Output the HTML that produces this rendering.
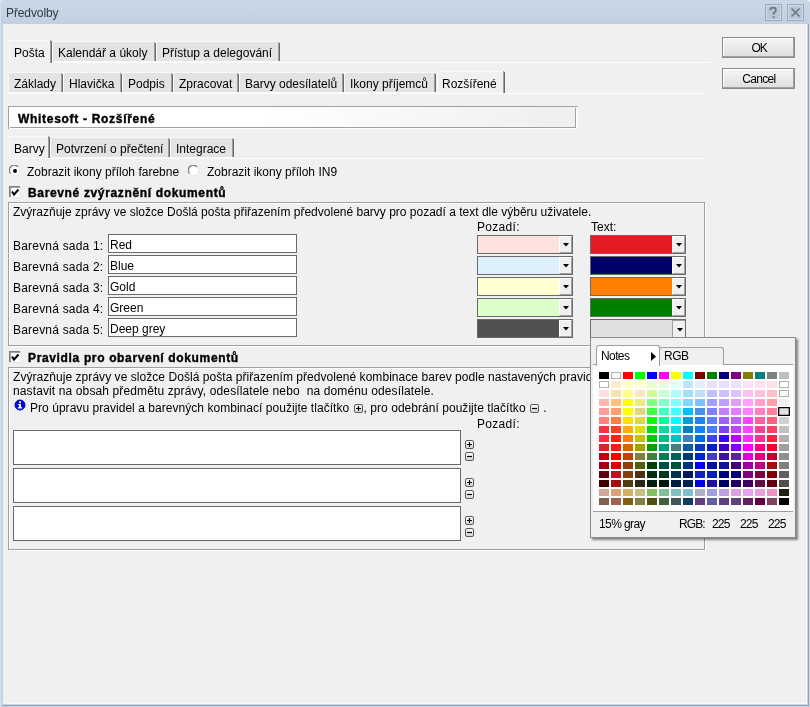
<!DOCTYPE html>
<html><head><meta charset="utf-8"><style>
html,body{margin:0;padding:0;width:810px;height:707px;overflow:hidden;position:relative;font-family:'Liberation Sans',sans-serif;}
.t{position:absolute;white-space:nowrap;line-height:1;will-change:transform;font-family:'Liberation Sans',sans-serif;}
.pal div{position:absolute;width:10px;height:7px}
.pm{display:inline-block;width:8px;height:8px;border:1px solid #555;border-radius:2px;font-size:9px;line-height:8px;text-align:center;vertical-align:0px;font-weight:700}
</style></head><body>
<div style="position:absolute;left:0px;top:0px;width:810px;height:707px;background:#fff;"></div><div style="position:absolute;left:0px;top:0px;width:810px;height:707px;background:#c6d5e5;border-radius:4px 4px 0 0;"></div><div style="position:absolute;left:1px;top:1px;width:808px;height:23px;background:linear-gradient(#c9d7e6,#c1d0e0);border-radius:3px 3px 0 0;"></div><div style="position:absolute;left:3px;top:24px;width:804px;height:680px;background:#f0f0f0;"></div><div style="position:absolute;left:806px;top:24px;width:1px;height:680px;background:#f8f8f8;"></div><div style="position:absolute;left:3px;top:703px;width:804px;height:1px;background:#f8f8f8;"></div><div style="position:absolute;left:808px;top:24px;width:1px;height:682px;background:#94a4b4;"></div><div style="position:absolute;left:2px;top:705px;width:807px;height:1px;background:#94a4b4;"></div><div style="position:absolute;left:0px;top:0px;width:1px;height:707px;background:#d3e0ee;"></div><div class="t" style="left:6px;top:7px;font-size:12px;font-weight:400;color:#2c4044;letter-spacing:-0.1px;">Předvolby</div><div style="position:absolute;left:765px;top:4px;width:17px;height:17px;background:#b8c7d6;border:1px solid #9aaaba;box-sizing:border-box;box-shadow:inset 0 0 0 1px #d0dce8;"></div><div style="position:absolute;left:787px;top:4px;width:17px;height:17px;background:#b8c7d6;border:1px solid #9aaaba;box-sizing:border-box;box-shadow:inset 0 0 0 1px #d0dce8;"></div><svg style="position:absolute;left:765px;top:4px" width="17" height="17"><path d="M5.3 6.2 Q5.3 3.6 8.1 3.6 Q10.9 3.6 10.9 6.1 Q10.9 7.6 8.6 8.9 V10.8" fill="none" stroke="#6b7780" stroke-width="1.7"/><rect x="7.7" y="12.2" width="1.8" height="1.9" fill="#6b7780"/></svg><svg style="position:absolute;left:787px;top:4px" width="17" height="17"><path d="M4.5 4.5 L12.5 12.5 M12.5 4.5 L4.5 12.5" stroke="#6b7780" stroke-width="1.6"/></svg><div style="position:absolute;left:722px;top:37px;width:73px;height:21px;background:linear-gradient(#f6f6f6,#dedede);border:1px solid #8a8a8a;box-sizing:border-box;box-shadow:inset -1px -1px 0 #a0a0a0, inset 1px 1px 0 #fff;"></div><div class="t" style="left:722px;top:42px;width:73px;text-align:center;font-size:12px;letter-spacing:-1.2px;text-indent:1.2px;">OK</div><div style="position:absolute;left:722px;top:68px;width:73px;height:21px;background:linear-gradient(#f6f6f6,#dedede);border:1px solid #8a8a8a;box-sizing:border-box;box-shadow:inset -1px -1px 0 #a0a0a0, inset 1px 1px 0 #fff;"></div><div class="t" style="left:722px;top:73px;width:73px;text-align:center;font-size:12px;letter-spacing:-0.7px;text-indent:0.7px;">Cancel</div><div style="position:absolute;left:9px;top:62px;width:702px;height:1px;background:#fdfdfd;"></div><div style="position:absolute;left:9px;top:93px;width:695px;height:1px;background:#fdfdfd;"></div><div style="position:absolute;left:9px;top:40px;width:42px;height:23px;background:#f0f0f0;"></div><div style="position:absolute;left:9px;top:40px;width:41px;height:1px;background:#f8f8f8;"></div><div style="position:absolute;left:9px;top:40px;width:1px;height:23px;background:#f8f8f8;"></div><div style="position:absolute;left:50px;top:40px;width:1px;height:23px;background:#a0a0a0;"></div><div style="position:absolute;left:51px;top:41px;width:1px;height:22px;background:#696969;"></div><div class="t" style="left:14px;top:47px;font-size:12px;font-weight:400;color:#000;letter-spacing:0px;">Pošta</div><div style="position:absolute;left:52px;top:41px;width:103px;height:21px;background:#f9f9f9;"></div><div style="position:absolute;left:53px;top:42px;width:102px;height:19px;background:#e3e3e3;"></div><div style="position:absolute;left:154px;top:42px;width:1px;height:19px;background:#a0a0a0;"></div><div style="position:absolute;left:155px;top:43px;width:1px;height:18px;background:#696969;"></div><div class="t" style="left:58px;top:47px;font-size:12px;font-weight:400;color:#000;letter-spacing:0px;">Kalendář a úkoly</div><div style="position:absolute;left:156px;top:41px;width:123px;height:21px;background:#f9f9f9;"></div><div style="position:absolute;left:157px;top:42px;width:122px;height:19px;background:#e3e3e3;"></div><div style="position:absolute;left:278px;top:42px;width:1px;height:19px;background:#a0a0a0;"></div><div style="position:absolute;left:279px;top:43px;width:1px;height:18px;background:#696969;"></div><div class="t" style="left:162px;top:47px;font-size:12px;font-weight:400;color:#000;letter-spacing:0px;">Přístup a delegování</div><div style="position:absolute;left:8px;top:72px;width:54px;height:21px;background:#f9f9f9;"></div><div style="position:absolute;left:9px;top:73px;width:53px;height:19px;background:#e3e3e3;"></div><div style="position:absolute;left:61px;top:73px;width:1px;height:19px;background:#a0a0a0;"></div><div style="position:absolute;left:62px;top:74px;width:1px;height:18px;background:#696969;"></div><div class="t" style="left:14px;top:78px;font-size:12px;font-weight:400;color:#000;letter-spacing:0px;">Základy</div><div style="position:absolute;left:63px;top:72px;width:58px;height:21px;background:#f9f9f9;"></div><div style="position:absolute;left:64px;top:73px;width:57px;height:19px;background:#e3e3e3;"></div><div style="position:absolute;left:120px;top:73px;width:1px;height:19px;background:#a0a0a0;"></div><div style="position:absolute;left:121px;top:74px;width:1px;height:18px;background:#696969;"></div><div class="t" style="left:69px;top:78px;font-size:12px;font-weight:400;color:#000;letter-spacing:0px;">Hlavička</div><div style="position:absolute;left:122px;top:72px;width:50px;height:21px;background:#f9f9f9;"></div><div style="position:absolute;left:123px;top:73px;width:49px;height:19px;background:#e3e3e3;"></div><div style="position:absolute;left:171px;top:73px;width:1px;height:19px;background:#a0a0a0;"></div><div style="position:absolute;left:172px;top:74px;width:1px;height:18px;background:#696969;"></div><div class="t" style="left:128px;top:78px;font-size:12px;font-weight:400;color:#000;letter-spacing:0px;">Podpis</div><div style="position:absolute;left:173px;top:72px;width:65px;height:21px;background:#f9f9f9;"></div><div style="position:absolute;left:174px;top:73px;width:64px;height:19px;background:#e3e3e3;"></div><div style="position:absolute;left:237px;top:73px;width:1px;height:19px;background:#a0a0a0;"></div><div style="position:absolute;left:238px;top:74px;width:1px;height:18px;background:#696969;"></div><div class="t" style="left:179px;top:78px;font-size:12px;font-weight:400;color:#000;letter-spacing:0px;">Zpracovat</div><div style="position:absolute;left:239px;top:72px;width:104px;height:21px;background:#f9f9f9;"></div><div style="position:absolute;left:240px;top:73px;width:103px;height:19px;background:#e3e3e3;"></div><div style="position:absolute;left:342px;top:73px;width:1px;height:19px;background:#a0a0a0;"></div><div style="position:absolute;left:343px;top:74px;width:1px;height:18px;background:#696969;"></div><div class="t" style="left:245px;top:78px;font-size:12px;font-weight:400;color:#000;letter-spacing:0px;">Barvy odesílatelů</div><div style="position:absolute;left:344px;top:72px;width:91px;height:21px;background:#f9f9f9;"></div><div style="position:absolute;left:345px;top:73px;width:90px;height:19px;background:#e3e3e3;"></div><div style="position:absolute;left:434px;top:73px;width:1px;height:19px;background:#a0a0a0;"></div><div style="position:absolute;left:435px;top:74px;width:1px;height:18px;background:#696969;"></div><div class="t" style="left:350px;top:78px;font-size:12px;font-weight:400;color:#000;letter-spacing:0px;">Ikony příjemců</div><div style="position:absolute;left:437px;top:71px;width:67px;height:22px;background:#f0f0f0;"></div><div style="position:absolute;left:437px;top:71px;width:66px;height:1px;background:#f8f8f8;"></div><div style="position:absolute;left:437px;top:71px;width:1px;height:22px;background:#f8f8f8;"></div><div style="position:absolute;left:503px;top:71px;width:1px;height:22px;background:#a0a0a0;"></div><div style="position:absolute;left:504px;top:72px;width:1px;height:21px;background:#696969;"></div><div class="t" style="left:442px;top:78px;font-size:12px;font-weight:400;color:#000;letter-spacing:0px;">Rozšířené</div><div style="position:absolute;left:8px;top:106px;width:570px;height:23px;background:linear-gradient(90deg,#ffffff 0%,#ffffff 45%,#f0f0f0 95%);"></div><div style="position:absolute;left:8px;top:106px;width:570px;height:1px;background:#a0a0a0;"></div><div style="position:absolute;left:8px;top:106px;width:1px;height:23px;background:#a0a0a0;"></div><div style="position:absolute;left:10px;top:127px;width:566px;height:1px;background:#a0a0a0;"></div><div style="position:absolute;left:575px;top:108px;width:1px;height:20px;background:#a0a0a0;"></div><div style="position:absolute;left:9px;top:128px;width:569px;height:1px;background:#fdfdfd;"></div><div style="position:absolute;left:576px;top:107px;width:2px;height:22px;background:#fdfdfd;"></div><div class="t" style="left:18px;top:113px;font-size:12px;font-weight:700;color:#000;letter-spacing:0.7px;-webkit-text-stroke:0.4px #000;">Whitesoft - Rozšířené</div><div style="position:absolute;left:9px;top:136px;width:40px;height:22px;background:#f0f0f0;"></div><div style="position:absolute;left:9px;top:136px;width:39px;height:1px;background:#f8f8f8;"></div><div style="position:absolute;left:9px;top:136px;width:1px;height:22px;background:#f8f8f8;"></div><div style="position:absolute;left:48px;top:136px;width:1px;height:22px;background:#a0a0a0;"></div><div style="position:absolute;left:49px;top:137px;width:1px;height:21px;background:#696969;"></div><div class="t" style="left:14px;top:143px;font-size:12px;font-weight:400;color:#000;letter-spacing:0px;">Barvy</div><div style="position:absolute;left:50px;top:137px;width:119px;height:21px;background:#f9f9f9;"></div><div style="position:absolute;left:51px;top:138px;width:118px;height:19px;background:#e3e3e3;"></div><div style="position:absolute;left:168px;top:138px;width:1px;height:19px;background:#a0a0a0;"></div><div style="position:absolute;left:169px;top:139px;width:1px;height:18px;background:#696969;"></div><div class="t" style="left:56px;top:143px;font-size:12px;font-weight:400;color:#000;letter-spacing:0px;">Potvrzení o přečtení</div><div style="position:absolute;left:170px;top:137px;width:63px;height:21px;background:#f9f9f9;"></div><div style="position:absolute;left:171px;top:138px;width:62px;height:19px;background:#e3e3e3;"></div><div style="position:absolute;left:232px;top:138px;width:1px;height:19px;background:#a0a0a0;"></div><div style="position:absolute;left:233px;top:139px;width:1px;height:18px;background:#696969;"></div><div class="t" style="left:176px;top:143px;font-size:12px;font-weight:400;color:#000;letter-spacing:0px;">Integrace</div><div style="position:absolute;left:9px;top:158px;width:695px;height:1px;background:#fdfdfd;"></div><svg style="position:absolute;left:9px;top:165px" width="12" height="12"><circle cx="6" cy="6" r="5" fill="#fff" stroke="#e8e8e8" stroke-width="1"/><path d="M1.5 8.5 A5 5 0 0 1 9 1.8" fill="none" stroke="#808080" stroke-width="1.3"/><circle cx="6" cy="6" r="2" fill="#000"/></svg><div class="t" style="left:27px;top:166px;font-size:12px;font-weight:400;color:#000;letter-spacing:0px;">Zobrazit ikony příloh farebne</div><svg style="position:absolute;left:188px;top:165px" width="12" height="12"><circle cx="6" cy="6" r="5" fill="#fff" stroke="#e8e8e8" stroke-width="1"/><path d="M1.5 8.5 A5 5 0 0 1 9 1.8" fill="none" stroke="#808080" stroke-width="1.3"/></svg><div class="t" style="left:207px;top:166px;font-size:12px;font-weight:400;color:#000;letter-spacing:0px;">Zobrazit ikony příloh IN9</div><svg style="position:absolute;left:9px;top:186px" width="12" height="12"><rect x="0" y="0" width="12" height="12" fill="#e6e6e6"/><rect x="0" y="0" width="11" height="11" fill="#808080"/><rect x="1" y="1" width="10" height="10" fill="#a0a0a0"/><rect x="2" y="2" width="9" height="9" fill="#fff"/><path d="M3 5.5 L5 8.5 L9.5 3.5" fill="none" stroke="#000" stroke-width="2"/></svg><div class="t" style="left:28px;top:187px;font-size:12px;font-weight:700;color:#000;letter-spacing:0.65px;-webkit-text-stroke:0.4px #000;">Barevné zvýraznění dokumentů</div><div style="position:absolute;left:8px;top:202px;width:697px;height:144px;border:1px solid #a0a0a0;box-sizing:border-box;box-shadow:1px 1px 0 #fff, inset 1px 1px 0 #fff;"></div><div class="t" style="left:13px;top:206px;font-size:12px;font-weight:400;color:#000;letter-spacing:0px;">Zvýrazňuje zprávy ve složce Došlá pošta přiřazením předvolené barvy pro pozadí a text dle výběru uživatele.</div><div class="t" style="left:477px;top:221px;font-size:12px;font-weight:400;color:#000;letter-spacing:0.3px;">Pozadí:</div><div class="t" style="left:590.5px;top:221px;font-size:12px;font-weight:400;color:#000;letter-spacing:0px;">Text:</div><div class="t" style="left:13px;top:240px;font-size:12px;font-weight:400;color:#000;letter-spacing:0.2px;">Barevná sada 1:</div><div style="position:absolute;left:108px;top:234px;width:189px;height:19px;background:#fff;border:1px solid #6a6a6a;box-sizing:border-box;"></div><div class="t" style="left:110px;top:239px;font-size:12px;font-weight:400;color:#000;letter-spacing:0px;">Red</div><div style="position:absolute;left:477px;top:235px;width:96px;height:19px;background:#fde2de;border:1px solid #6a6a6a;box-sizing:border-box;"></div><div style="position:absolute;left:559px;top:236px;width:13px;height:17px;background:#f0f0f0;border-left:1px solid #fff;border-top:1px solid #fff;border-right:1px solid #a0a0a0;border-bottom:1px solid #a0a0a0;box-sizing:border-box;"></div><svg style="position:absolute;left:563px;top:243px" width="6" height="4"><path d="M0 0 H6 L3 3.5 Z" fill="#000"/></svg><div style="position:absolute;left:590px;top:235px;width:96px;height:19px;background:#e31b23;border:1px solid #6a6a6a;box-sizing:border-box;"></div><div style="position:absolute;left:672px;top:236px;width:13px;height:17px;background:#f0f0f0;border-left:1px solid #fff;border-top:1px solid #fff;border-right:1px solid #a0a0a0;border-bottom:1px solid #a0a0a0;box-sizing:border-box;"></div><svg style="position:absolute;left:676px;top:243px" width="6" height="4"><path d="M0 0 H6 L3 3.5 Z" fill="#000"/></svg><div class="t" style="left:13px;top:261px;font-size:12px;font-weight:400;color:#000;letter-spacing:0.2px;">Barevná sada 2:</div><div style="position:absolute;left:108px;top:255px;width:189px;height:19px;background:#fff;border:1px solid #6a6a6a;box-sizing:border-box;"></div><div class="t" style="left:110px;top:260px;font-size:12px;font-weight:400;color:#000;letter-spacing:0px;">Blue</div><div style="position:absolute;left:477px;top:256px;width:96px;height:19px;background:#dff0fd;border:1px solid #6a6a6a;box-sizing:border-box;"></div><div style="position:absolute;left:559px;top:257px;width:13px;height:17px;background:#f0f0f0;border-left:1px solid #fff;border-top:1px solid #fff;border-right:1px solid #a0a0a0;border-bottom:1px solid #a0a0a0;box-sizing:border-box;"></div><svg style="position:absolute;left:563px;top:264px" width="6" height="4"><path d="M0 0 H6 L3 3.5 Z" fill="#000"/></svg><div style="position:absolute;left:590px;top:256px;width:96px;height:19px;background:#000066;border:1px solid #6a6a6a;box-sizing:border-box;"></div><div style="position:absolute;left:672px;top:257px;width:13px;height:17px;background:#f0f0f0;border-left:1px solid #fff;border-top:1px solid #fff;border-right:1px solid #a0a0a0;border-bottom:1px solid #a0a0a0;box-sizing:border-box;"></div><svg style="position:absolute;left:676px;top:264px" width="6" height="4"><path d="M0 0 H6 L3 3.5 Z" fill="#000"/></svg><div class="t" style="left:13px;top:282px;font-size:12px;font-weight:400;color:#000;letter-spacing:0.2px;">Barevná sada 3:</div><div style="position:absolute;left:108px;top:276px;width:189px;height:19px;background:#fff;border:1px solid #6a6a6a;box-sizing:border-box;"></div><div class="t" style="left:110px;top:281px;font-size:12px;font-weight:400;color:#000;letter-spacing:0px;">Gold</div><div style="position:absolute;left:477px;top:277px;width:96px;height:19px;background:#ffffd2;border:1px solid #6a6a6a;box-sizing:border-box;"></div><div style="position:absolute;left:559px;top:278px;width:13px;height:17px;background:#f0f0f0;border-left:1px solid #fff;border-top:1px solid #fff;border-right:1px solid #a0a0a0;border-bottom:1px solid #a0a0a0;box-sizing:border-box;"></div><svg style="position:absolute;left:563px;top:285px" width="6" height="4"><path d="M0 0 H6 L3 3.5 Z" fill="#000"/></svg><div style="position:absolute;left:590px;top:277px;width:96px;height:19px;background:#ff8000;border:1px solid #6a6a6a;box-sizing:border-box;"></div><div style="position:absolute;left:672px;top:278px;width:13px;height:17px;background:#f0f0f0;border-left:1px solid #fff;border-top:1px solid #fff;border-right:1px solid #a0a0a0;border-bottom:1px solid #a0a0a0;box-sizing:border-box;"></div><svg style="position:absolute;left:676px;top:285px" width="6" height="4"><path d="M0 0 H6 L3 3.5 Z" fill="#000"/></svg><div class="t" style="left:13px;top:303px;font-size:12px;font-weight:400;color:#000;letter-spacing:0.2px;">Barevná sada 4:</div><div style="position:absolute;left:108px;top:297px;width:189px;height:19px;background:#fff;border:1px solid #6a6a6a;box-sizing:border-box;"></div><div class="t" style="left:110px;top:302px;font-size:12px;font-weight:400;color:#000;letter-spacing:0px;">Green</div><div style="position:absolute;left:477px;top:298px;width:96px;height:19px;background:#dcfec8;border:1px solid #6a6a6a;box-sizing:border-box;"></div><div style="position:absolute;left:559px;top:299px;width:13px;height:17px;background:#f0f0f0;border-left:1px solid #fff;border-top:1px solid #fff;border-right:1px solid #a0a0a0;border-bottom:1px solid #a0a0a0;box-sizing:border-box;"></div><svg style="position:absolute;left:563px;top:306px" width="6" height="4"><path d="M0 0 H6 L3 3.5 Z" fill="#000"/></svg><div style="position:absolute;left:590px;top:298px;width:96px;height:19px;background:#007f00;border:1px solid #6a6a6a;box-sizing:border-box;"></div><div style="position:absolute;left:672px;top:299px;width:13px;height:17px;background:#f0f0f0;border-left:1px solid #fff;border-top:1px solid #fff;border-right:1px solid #a0a0a0;border-bottom:1px solid #a0a0a0;box-sizing:border-box;"></div><svg style="position:absolute;left:676px;top:306px" width="6" height="4"><path d="M0 0 H6 L3 3.5 Z" fill="#000"/></svg><div class="t" style="left:13px;top:324px;font-size:12px;font-weight:400;color:#000;letter-spacing:0.2px;">Barevná sada 5:</div><div style="position:absolute;left:108px;top:318px;width:189px;height:19px;background:#fff;border:1px solid #6a6a6a;box-sizing:border-box;"></div><div class="t" style="left:110px;top:323px;font-size:12px;font-weight:400;color:#000;letter-spacing:0px;">Deep grey</div><div style="position:absolute;left:477px;top:319px;width:96px;height:19px;background:#505050;border:1px solid #6a6a6a;box-sizing:border-box;"></div><div style="position:absolute;left:559px;top:320px;width:13px;height:17px;background:#f0f0f0;border-left:1px solid #fff;border-top:1px solid #fff;border-right:1px solid #a0a0a0;border-bottom:1px solid #a0a0a0;box-sizing:border-box;"></div><svg style="position:absolute;left:563px;top:327px" width="6" height="4"><path d="M0 0 H6 L3 3.5 Z" fill="#000"/></svg><div style="position:absolute;left:590px;top:319px;width:96px;height:19px;background:#e0e0e0;border:1px solid #6a6a6a;box-sizing:border-box;"></div><div style="position:absolute;left:672px;top:320px;width:13px;height:17px;background:#f0f0f0;border-left:1px solid #a0a0a0;border-top:1px solid #a0a0a0;box-sizing:border-box;"></div><svg style="position:absolute;left:677px;top:328px" width="6" height="4"><path d="M0 0 H6 L3 3.5 Z" fill="#000"/></svg><svg style="position:absolute;left:9px;top:351px" width="12" height="12"><rect x="0" y="0" width="12" height="12" fill="#e6e6e6"/><rect x="0" y="0" width="11" height="11" fill="#808080"/><rect x="1" y="1" width="10" height="10" fill="#a0a0a0"/><rect x="2" y="2" width="9" height="9" fill="#fff"/><path d="M3 5.5 L5 8.5 L9.5 3.5" fill="none" stroke="#000" stroke-width="2"/></svg><div class="t" style="left:28px;top:352px;font-size:12px;font-weight:700;color:#000;letter-spacing:0.65px;-webkit-text-stroke:0.4px #000;">Pravidla pro obarvení dokumentů</div><div style="position:absolute;left:8px;top:367px;width:697px;height:183px;border:1px solid #a0a0a0;box-sizing:border-box;box-shadow:1px 1px 0 #fff, inset 1px 1px 0 #fff;"></div><div class="t" style="left:13px;top:371px;font-size:12px;font-weight:400;color:#000;letter-spacing:0.05px;">Zvýrazňuje zprávy ve složce Došlá pošta přiřazením předvolené kombinace barev podle nastavených pravidel. Pravidla lze</div><div class="t" style="left:13px;top:385px;font-size:12px;font-weight:400;color:#000;letter-spacing:0.12px;">nastavit na obsah předmětu zprávy, odesílatele nebo&nbsp; na doménu odesílatele.</div><svg style="position:absolute;left:14px;top:399px" width="12" height="12"><circle cx="6" cy="6" r="5" fill="#0000ff" stroke="#000070" stroke-width="0.9"/><rect x="5.1" y="2.3" width="1.9" height="1.8" fill="#fff"/><path d="M4 5 H7 V8.3 H8.2 V9.5 H3.8 V8.3 H5 V6.1 H4 Z" fill="#fff"/></svg><div class="t" style="left:30px;top:402px;font-size:12px;font-weight:400;color:#000;letter-spacing:0.04px;">Pro úpravu pravidel a barevných kombinací použijte tlačítko <svg style="vertical-align:-1px;margin:0 1px 0 1px" width="9" height="9"><defs><linearGradient id="gi1" x1="0" y1="0" x2="0" y2="1"><stop offset="0" stop-color="#ffffff"/><stop offset="1" stop-color="#d4d4d4"/></linearGradient></defs><rect x="0.5" y="0.5" width="8" height="8" rx="1.5" fill="url(#gi1)" stroke="#5a5a5a"/><path d="M2 4.5 H7 M4.5 2 V7" stroke="#000" stroke-width="1.2"/></svg>, pro odebrání použijte tlačítko <svg style="vertical-align:-1px;margin:0 1px 0 1px" width="9" height="9"><defs><linearGradient id="gi2" x1="0" y1="0" x2="0" y2="1"><stop offset="0" stop-color="#ffffff"/><stop offset="1" stop-color="#d4d4d4"/></linearGradient></defs><rect x="0.5" y="0.5" width="8" height="8" rx="1.5" fill="url(#gi2)" stroke="#5a5a5a"/><path d="M2 4.5 H7" stroke="#000" stroke-width="1.2"/></svg> .</div><div class="t" style="left:477px;top:418px;font-size:12px;font-weight:400;color:#000;letter-spacing:0.3px;">Pozadí:</div><div style="position:absolute;left:13px;top:430px;width:448px;height:35px;background:#fff;border:1px solid #6a6a6a;box-sizing:border-box;"></div><svg style="position:absolute;left:465px;top:440px" width="9" height="9"><defs><linearGradient id="g465440" x1="0" y1="0" x2="0" y2="1"><stop offset="0" stop-color="#ffffff"/><stop offset="1" stop-color="#d4d4d4"/></linearGradient></defs><rect x="0.5" y="0.5" width="8" height="8" rx="1.5" fill="url(#g465440)" stroke="#5a5a5a"/><path d="M2 4.5 H7 M4.5 2 V7" stroke="#000" stroke-width="1.2"/></svg><svg style="position:absolute;left:465px;top:452px" width="9" height="9"><defs><linearGradient id="g465452" x1="0" y1="0" x2="0" y2="1"><stop offset="0" stop-color="#ffffff"/><stop offset="1" stop-color="#d4d4d4"/></linearGradient></defs><rect x="0.5" y="0.5" width="8" height="8" rx="1.5" fill="url(#g465452)" stroke="#5a5a5a"/><path d="M2 4.5 H7" stroke="#000" stroke-width="1.2"/></svg><div style="position:absolute;left:13px;top:468px;width:448px;height:35px;background:#fff;border:1px solid #6a6a6a;box-sizing:border-box;"></div><svg style="position:absolute;left:465px;top:478px" width="9" height="9"><defs><linearGradient id="g465478" x1="0" y1="0" x2="0" y2="1"><stop offset="0" stop-color="#ffffff"/><stop offset="1" stop-color="#d4d4d4"/></linearGradient></defs><rect x="0.5" y="0.5" width="8" height="8" rx="1.5" fill="url(#g465478)" stroke="#5a5a5a"/><path d="M2 4.5 H7 M4.5 2 V7" stroke="#000" stroke-width="1.2"/></svg><svg style="position:absolute;left:465px;top:490px" width="9" height="9"><defs><linearGradient id="g465490" x1="0" y1="0" x2="0" y2="1"><stop offset="0" stop-color="#ffffff"/><stop offset="1" stop-color="#d4d4d4"/></linearGradient></defs><rect x="0.5" y="0.5" width="8" height="8" rx="1.5" fill="url(#g465490)" stroke="#5a5a5a"/><path d="M2 4.5 H7" stroke="#000" stroke-width="1.2"/></svg><div style="position:absolute;left:13px;top:506px;width:448px;height:35px;background:#fff;border:1px solid #6a6a6a;box-sizing:border-box;"></div><svg style="position:absolute;left:465px;top:516px" width="9" height="9"><defs><linearGradient id="g465516" x1="0" y1="0" x2="0" y2="1"><stop offset="0" stop-color="#ffffff"/><stop offset="1" stop-color="#d4d4d4"/></linearGradient></defs><rect x="0.5" y="0.5" width="8" height="8" rx="1.5" fill="url(#g465516)" stroke="#5a5a5a"/><path d="M2 4.5 H7 M4.5 2 V7" stroke="#000" stroke-width="1.2"/></svg><svg style="position:absolute;left:465px;top:528px" width="9" height="9"><defs><linearGradient id="g465528" x1="0" y1="0" x2="0" y2="1"><stop offset="0" stop-color="#ffffff"/><stop offset="1" stop-color="#d4d4d4"/></linearGradient></defs><rect x="0.5" y="0.5" width="8" height="8" rx="1.5" fill="url(#g465528)" stroke="#5a5a5a"/><path d="M2 4.5 H7" stroke="#000" stroke-width="1.2"/></svg><div style="position:absolute;left:590px;top:337px;width:206px;height:201px;background:#f0f0f0;border:1px solid #8a8a8a;box-sizing:border-box;box-shadow:2px 2px 2px rgba(0,0,0,0.45);"></div><div style="position:absolute;left:593px;top:365px;width:200px;height:147px;background:#fff;border-bottom:1px solid #a0a0a0;box-sizing:border-box;"></div><div style="position:absolute;left:593px;top:364px;width:200px;height:1px;background:#a0a0a0;"></div><div style="position:absolute;left:659px;top:347px;width:65px;height:18px;background:#f0f0f0;border:1px solid #a0a0a0;border-bottom:none;border-radius:3px 3px 0 0;box-sizing:border-box;"></div><div style="position:absolute;left:596px;top:345px;width:64px;height:21px;background:#fff;border:1px solid #a0a0a0;border-bottom:none;border-radius:3px 3px 0 0;box-sizing:border-box;"></div><div class="t" style="left:601px;top:350px;font-size:12px;font-weight:400;color:#000;letter-spacing:-0.6px;">Notes</div><svg style="position:absolute;left:651px;top:352px" width="6" height="9"><path d="M0 0 L5 4.5 L0 9Z" fill="#000"/></svg><div class="t" style="left:664px;top:350px;font-size:12px;font-weight:400;color:#000;letter-spacing:-0.5px;">RGB</div><div class="t" style="left:599px;top:518px;font-size:12px;font-weight:400;color:#000;letter-spacing:-0.6px;">15% gray</div><div class="t" style="left:679px;top:518px;font-size:12px;font-weight:400;color:#000;letter-spacing:-0.9px;">RGB:</div><div class="t" style="left:712px;top:518px;font-size:12px;font-weight:400;color:#000;letter-spacing:-0.8px;">225</div><div class="t" style="left:740px;top:518px;font-size:12px;font-weight:400;color:#000;letter-spacing:-0.8px;">225</div><div class="t" style="left:768px;top:518px;font-size:12px;font-weight:400;color:#000;letter-spacing:-0.8px;">225</div><div class="pal"><div style="left:599px;top:372px;background:#000000"></div><div style="left:611px;top:372px;background:#fff;border:1px solid #b0b0b0;box-sizing:border-box"></div><div style="left:623px;top:372px;background:#ff0000"></div><div style="left:635px;top:372px;background:#00ff00"></div><div style="left:647px;top:372px;background:#0000ff"></div><div style="left:659px;top:372px;background:#ff00ff"></div><div style="left:671px;top:372px;background:#ffff00"></div><div style="left:683px;top:372px;background:#00ffff"></div><div style="left:695px;top:372px;background:#800000"></div><div style="left:707px;top:372px;background:#008000"></div><div style="left:719px;top:372px;background:#000080"></div><div style="left:731px;top:372px;background:#800080"></div><div style="left:743px;top:372px;background:#808000"></div><div style="left:755px;top:372px;background:#008080"></div><div style="left:767px;top:372px;background:#808080"></div><div style="left:779px;top:372px;background:#c0c0c0"></div><div style="left:599px;top:381px;background:#fff;border:1px solid #b0b0b0;box-sizing:border-box"></div><div style="left:611px;top:381px;background:#ffeccc"></div><div style="left:623px;top:381px;background:#ffffc8"></div><div style="left:635px;top:381px;background:#ffffd8"></div><div style="left:647px;top:381px;background:#e8ffc8"></div><div style="left:659px;top:381px;background:#e0ffe0"></div><div style="left:671px;top:381px;background:#e0ffff"></div><div style="left:683px;top:381px;background:#c0e4ff"></div><div style="left:695px;top:381px;background:#e0f0ff"></div><div style="left:707px;top:381px;background:#e8e0ff"></div><div style="left:719px;top:381px;background:#e8e0ff"></div><div style="left:731px;top:381px;background:#f0e0ff"></div><div style="left:743px;top:381px;background:#ffe0ff"></div><div style="left:755px;top:381px;background:#ffe0f0"></div><div style="left:767px;top:381px;background:#ffe0e8"></div><div style="left:779px;top:381px;background:#fff;border:1px solid #b0b0b0;box-sizing:border-box"></div><div style="left:599px;top:390px;background:#ffe0e0"></div><div style="left:611px;top:390px;background:#f4e4b0"></div><div style="left:623px;top:390px;background:#ffff80"></div><div style="left:635px;top:390px;background:#f8e8c0"></div><div style="left:647px;top:390px;background:#ccff99"></div><div style="left:659px;top:390px;background:#c8ffd8"></div><div style="left:671px;top:390px;background:#a8ffff"></div><div style="left:683px;top:390px;background:#a0e0ff"></div><div style="left:695px;top:390px;background:#c0e0f8"></div><div style="left:707px;top:390px;background:#c0c0ff"></div><div style="left:719px;top:390px;background:#d0c0ff"></div><div style="left:731px;top:390px;background:#e0c0ff"></div><div style="left:743px;top:390px;background:#ffc0f0"></div><div style="left:755px;top:390px;background:#ffc0e0"></div><div style="left:767px;top:390px;background:#ffc0c8"></div><div style="left:779px;top:390px;background:#f8f8f8;border:1px solid #b0b0b0;box-sizing:border-box"></div><div style="left:599px;top:399px;background:#ffb4b4"></div><div style="left:611px;top:399px;background:#ffc080"></div><div style="left:623px;top:399px;background:#ffff00"></div><div style="left:635px;top:399px;background:#f0e880"></div><div style="left:647px;top:399px;background:#80ff80"></div><div style="left:659px;top:399px;background:#80ffc8"></div><div style="left:671px;top:399px;background:#80ffff"></div><div style="left:683px;top:399px;background:#80d8ff"></div><div style="left:695px;top:399px;background:#80c0ff"></div><div style="left:707px;top:399px;background:#a0a0ff"></div><div style="left:719px;top:399px;background:#c0a0ff"></div><div style="left:731px;top:399px;background:#e0a0f0"></div><div style="left:743px;top:399px;background:#ffa0ff"></div><div style="left:755px;top:399px;background:#ffa0d0"></div><div style="left:767px;top:399px;background:#ffa0a8"></div><div style="left:779px;top:399px;background:#f0f0f0"></div><div style="left:599px;top:408px;background:#ff9c9c"></div><div style="left:611px;top:408px;background:#ffa070"></div><div style="left:623px;top:408px;background:#ffff00"></div><div style="left:635px;top:408px;background:#e0d880"></div><div style="left:647px;top:408px;background:#40ff40"></div><div style="left:659px;top:408px;background:#40ffc0"></div><div style="left:671px;top:408px;background:#40ffff"></div><div style="left:683px;top:408px;background:#00c0ff"></div><div style="left:695px;top:408px;background:#4890f0"></div><div style="left:707px;top:408px;background:#8080ff"></div><div style="left:719px;top:408px;background:#c080ff"></div><div style="left:731px;top:408px;background:#e080ff"></div><div style="left:743px;top:408px;background:#ff80ff"></div><div style="left:755px;top:408px;background:#ff80c0"></div><div style="left:767px;top:408px;background:#ff8098"></div><div style="left:778px;top:407px;width:12px;height:9px;background:#e1e1e1;border:1px solid #000;box-sizing:border-box;box-shadow:inset 0 0 0 0.3px #000"></div><div style="left:599px;top:417px;background:#ff8080"></div><div style="left:611px;top:417px;background:#ff8040"></div><div style="left:623px;top:417px;background:#ffe000"></div><div style="left:635px;top:417px;background:#e0d840"></div><div style="left:647px;top:417px;background:#00ff00"></div><div style="left:659px;top:417px;background:#00ffa0"></div><div style="left:671px;top:417px;background:#00ffff"></div><div style="left:683px;top:417px;background:#00a0e0"></div><div style="left:695px;top:417px;background:#2080ff"></div><div style="left:707px;top:417px;background:#6080ff"></div><div style="left:719px;top:417px;background:#a060ff"></div><div style="left:731px;top:417px;background:#c060ff"></div><div style="left:743px;top:417px;background:#ff40ff"></div><div style="left:755px;top:417px;background:#ff60a0"></div><div style="left:767px;top:417px;background:#ff6080"></div><div style="left:779px;top:417px;background:#d0d0d0"></div><div style="left:599px;top:426px;background:#ff3040"></div><div style="left:611px;top:426px;background:#ff4020"></div><div style="left:623px;top:426px;background:#ffb000"></div><div style="left:635px;top:426px;background:#e0e000"></div><div style="left:647px;top:426px;background:#00e000"></div><div style="left:659px;top:426px;background:#00e0a0"></div><div style="left:671px;top:426px;background:#00e0e0"></div><div style="left:683px;top:426px;background:#0080c0"></div><div style="left:695px;top:426px;background:#1080ff"></div><div style="left:707px;top:426px;background:#4080ff"></div><div style="left:719px;top:426px;background:#8040ff"></div><div style="left:731px;top:426px;background:#c040ff"></div><div style="left:743px;top:426px;background:#ff40ff"></div><div style="left:755px;top:426px;background:#ff4090"></div><div style="left:767px;top:426px;background:#ff4060"></div><div style="left:779px;top:426px;background:#c0c0c0"></div><div style="left:599px;top:435px;background:#ff2848"></div><div style="left:611px;top:435px;background:#ff2010"></div><div style="left:623px;top:435px;background:#ff8000"></div><div style="left:635px;top:435px;background:#c8c000"></div><div style="left:647px;top:435px;background:#00c800"></div><div style="left:659px;top:435px;background:#00c090"></div><div style="left:671px;top:435px;background:#00c0c0"></div><div style="left:683px;top:435px;background:#4080c0"></div><div style="left:695px;top:435px;background:#0070e0"></div><div style="left:707px;top:435px;background:#4040ff"></div><div style="left:719px;top:435px;background:#4000ff"></div><div style="left:731px;top:435px;background:#c000ff"></div><div style="left:743px;top:435px;background:#ff30ff"></div><div style="left:755px;top:435px;background:#ff3090"></div><div style="left:767px;top:435px;background:#ff2040"></div><div style="left:779px;top:435px;background:#b0b0b0"></div><div style="left:599px;top:444px;background:#e02030"></div><div style="left:611px;top:444px;background:#f02010"></div><div style="left:623px;top:444px;background:#e06000"></div><div style="left:635px;top:444px;background:#a8a000"></div><div style="left:647px;top:444px;background:#00a000"></div><div style="left:659px;top:444px;background:#00a080"></div><div style="left:671px;top:444px;background:#408080"></div><div style="left:683px;top:444px;background:#0060a0"></div><div style="left:695px;top:444px;background:#0040c0"></div><div style="left:707px;top:444px;background:#0020c0"></div><div style="left:719px;top:444px;background:#4000c0"></div><div style="left:731px;top:444px;background:#8000ff"></div><div style="left:743px;top:444px;background:#ff00ff"></div><div style="left:755px;top:444px;background:#ff0080"></div><div style="left:767px;top:444px;background:#ff0030"></div><div style="left:779px;top:444px;background:#a0a0a0"></div><div style="left:599px;top:453px;background:#c00010"></div><div style="left:611px;top:453px;background:#ff0000"></div><div style="left:623px;top:453px;background:#c04000"></div><div style="left:635px;top:453px;background:#808040"></div><div style="left:647px;top:453px;background:#408040"></div><div style="left:659px;top:453px;background:#008050"></div><div style="left:671px;top:453px;background:#006060"></div><div style="left:683px;top:453px;background:#003880"></div><div style="left:695px;top:453px;background:#0020e0"></div><div style="left:707px;top:453px;background:#4040c0"></div><div style="left:719px;top:453px;background:#4010a0"></div><div style="left:731px;top:453px;background:#6020a0"></div><div style="left:743px;top:453px;background:#e000e0"></div><div style="left:755px;top:453px;background:#e00080"></div><div style="left:767px;top:453px;background:#c00030"></div><div style="left:779px;top:453px;background:#909090"></div><div style="left:599px;top:462px;background:#a00010"></div><div style="left:611px;top:462px;background:#e00000"></div><div style="left:623px;top:462px;background:#904010"></div><div style="left:635px;top:462px;background:#506010"></div><div style="left:647px;top:462px;background:#004000"></div><div style="left:659px;top:462px;background:#005040"></div><div style="left:671px;top:462px;background:#005040"></div><div style="left:683px;top:462px;background:#003080"></div><div style="left:695px;top:462px;background:#0000ff"></div><div style="left:707px;top:462px;background:#0010a0"></div><div style="left:719px;top:462px;background:#1010a0"></div><div style="left:731px;top:462px;background:#400080"></div><div style="left:743px;top:462px;background:#a000a0"></div><div style="left:755px;top:462px;background:#c00080"></div><div style="left:767px;top:462px;background:#a01010"></div><div style="left:779px;top:462px;background:#808080"></div><div style="left:599px;top:471px;background:#600010"></div><div style="left:611px;top:471px;background:#c01020"></div><div style="left:623px;top:471px;background:#804010"></div><div style="left:635px;top:471px;background:#503010"></div><div style="left:647px;top:471px;background:#003010"></div><div style="left:659px;top:471px;background:#003820"></div><div style="left:671px;top:471px;background:#003050"></div><div style="left:683px;top:471px;background:#001860"></div><div style="left:695px;top:471px;background:#1020c0"></div><div style="left:707px;top:471px;background:#0020c0"></div><div style="left:719px;top:471px;background:#000080"></div><div style="left:731px;top:471px;background:#000080"></div><div style="left:743px;top:471px;background:#800080"></div><div style="left:755px;top:471px;background:#800040"></div><div style="left:767px;top:471px;background:#800000"></div><div style="left:779px;top:471px;background:#606060"></div><div style="left:599px;top:480px;background:#400000"></div><div style="left:611px;top:480px;background:#a01010"></div><div style="left:623px;top:480px;background:#504010"></div><div style="left:635px;top:480px;background:#282818"></div><div style="left:647px;top:480px;background:#002010"></div><div style="left:659px;top:480px;background:#001810"></div><div style="left:671px;top:480px;background:#002040"></div><div style="left:683px;top:480px;background:#002050"></div><div style="left:695px;top:480px;background:#0000e0"></div><div style="left:707px;top:480px;background:#2010a0"></div><div style="left:719px;top:480px;background:#000060"></div><div style="left:731px;top:480px;background:#200060"></div><div style="left:743px;top:480px;background:#400060"></div><div style="left:755px;top:480px;background:#601040"></div><div style="left:767px;top:480px;background:#600010"></div><div style="left:779px;top:480px;background:#505050"></div><div style="left:599px;top:489px;background:#d0a898"></div><div style="left:611px;top:489px;background:#e0a078"></div><div style="left:623px;top:489px;background:#d8b060"></div><div style="left:635px;top:489px;background:#c8c080"></div><div style="left:647px;top:489px;background:#80c060"></div><div style="left:659px;top:489px;background:#80c098"></div><div style="left:671px;top:489px;background:#80c0c0"></div><div style="left:683px;top:489px;background:#80c0d0"></div><div style="left:695px;top:489px;background:#b0b0c8"></div><div style="left:707px;top:489px;background:#a0a0e0"></div><div style="left:719px;top:489px;background:#c0a0e0"></div><div style="left:731px;top:489px;background:#e0a0e0"></div><div style="left:743px;top:489px;background:#e8a0f0"></div><div style="left:755px;top:489px;background:#e8a0e0"></div><div style="left:767px;top:489px;background:#f090c0"></div><div style="left:779px;top:489px;background:#202010"></div><div style="left:599px;top:498px;background:#806050"></div><div style="left:611px;top:498px;background:#a06050"></div><div style="left:623px;top:498px;background:#806010"></div><div style="left:635px;top:498px;background:#808040"></div><div style="left:647px;top:498px;background:#505010"></div><div style="left:659px;top:498px;background:#406040"></div><div style="left:671px;top:498px;background:#405858"></div><div style="left:683px;top:498px;background:#104060"></div><div style="left:695px;top:498px;background:#604080"></div><div style="left:707px;top:498px;background:#6060a0"></div><div style="left:719px;top:498px;background:#604080"></div><div style="left:731px;top:498px;background:#604080"></div><div style="left:743px;top:498px;background:#602060"></div><div style="left:755px;top:498px;background:#600040"></div><div style="left:767px;top:498px;background:#804060"></div><div style="left:779px;top:498px;background:#000000"></div></div>
</body></html>
